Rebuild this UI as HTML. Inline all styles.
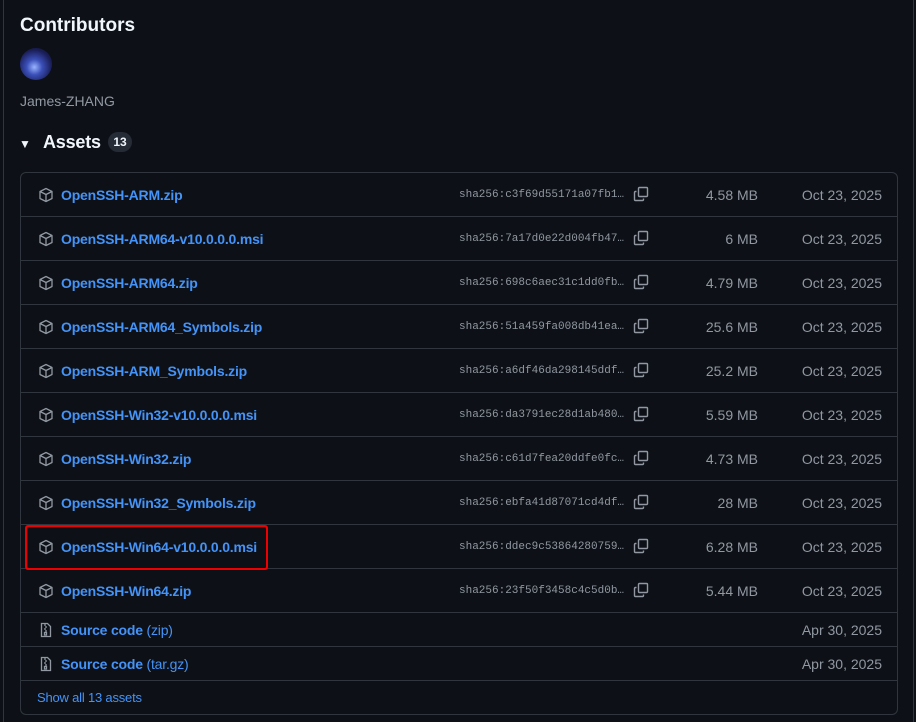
<!DOCTYPE html>
<html><head><style>
body{margin:0;background:#0d1117;width:916px;height:722px;overflow:hidden;font-family:"Liberation Sans",sans-serif;color:#f0f6fc;position:relative}
.vl{position:absolute;top:0;bottom:0;width:1px;background:#30363d}
h2{position:absolute;left:20px;top:15px;margin:0;font-size:19px;font-weight:bold}
.av{position:absolute;left:20px;top:48px;width:32px;height:32px;border-radius:50%;background:radial-gradient(circle at 45% 60%,#9ab4ff 0,#3a4fb8 30%,#1b1f5a 65%,#0c0e25 100%)}
.name{position:absolute;left:20px;top:93px;font-size:14px;color:#9198a1}
.tri{position:absolute;left:19px;top:137px;font-size:12px}
.as{position:absolute;left:43px;top:132px;font-size:18px;font-weight:bold;letter-spacing:-0.2px}
.cnt{position:absolute;left:108px;top:132px;width:24px;height:20px;border-radius:10px;background:#262c36;font-size:12px;text-align:center;line-height:20px;font-weight:bold}
.box{position:absolute;left:20px;top:172px;width:876px;height:541px;border:1px solid #30363d;border-radius:6px}
.row{position:absolute;left:0;right:0;border-bottom:1px solid #30363d;font-size:14px}
.row a{position:absolute;left:40px;color:#4493f8;font-weight:bold;text-decoration:none;letter-spacing:-0.2px}
.ic{position:absolute;left:17px}
.sha{position:absolute;left:438px;font-family:"Liberation Mono",monospace;font-size:11px;color:#9198a1}
.cp{position:absolute;left:612px}
.sz{position:absolute;right:139px;color:#9198a1}
.dt{position:absolute;right:15px;color:#9198a1}
</style></head><body>
<div class="vl" style="left:3px"></div><div class="vl" style="left:913px"></div>
<h2>Contributors</h2>
<div class="av"></div>
<div class="name">James-ZHANG</div>
<div class="tri">▼</div><div class="as">Assets</div><div class="cnt">13</div>
<div class="box" id="b"></div>
<div style="position:absolute;left:25px;top:525px;width:239px;height:41px;border:2px solid #e00;border-radius:3px"></div>
<script>
const d=[["OpenSSH-ARM.zip","c3f69d55171a07fb1","4.58 MB"],["OpenSSH-ARM64-v10.0.0.0.msi","7a17d0e22d004fb47","6 MB"],["OpenSSH-ARM64.zip","698c6aec31c1dd0fb","4.79 MB"],["OpenSSH-ARM64_Symbols.zip","51a459fa008db41ea","25.6 MB"],["OpenSSH-ARM_Symbols.zip","a6df46da298145ddf","25.2 MB"],["OpenSSH-Win32-v10.0.0.0.msi","da3791ec28d1ab480","5.59 MB"],["OpenSSH-Win32.zip","c61d7fea20ddfe0fc","4.73 MB"],["OpenSSH-Win32_Symbols.zip","ebfa41d87071cd4df","28 MB"],["OpenSSH-Win64-v10.0.0.0.msi","ddec9c53864280759","6.28 MB"],["OpenSSH-Win64.zip","23f50f3458c4c5d0b","5.44 MB"]];
const pkg='<svg width="16" height="16" viewBox="0 0 16 16" fill="none" stroke="#9198a1" stroke-width="1.3" stroke-linejoin="round"><path d="M8 1.5l6 3v7l-6 3-6-3v-7z"/><path d="M2 4.5l6 3 6-3M8 7.5v7"/></svg>';
const cp='<svg width="16" height="16" viewBox="0 0 16 16" fill="none" stroke="#9198a1" stroke-width="1.4"><rect x="5.5" y="1.5" width="9" height="9" rx="1"/><path d="M3.5 5.5h-1a1 1 0 0 0-1 1v7a1 1 0 0 0 1 1h7a1 1 0 0 0 1-1v-1"/></svg>';
const zip='<svg width="16" height="16" viewBox="0 0 16 16" fill="none" stroke="#9198a1" stroke-width="1.3"><path d="M3.5 1.5h6l3 3v10h-9z"/><path d="M7 2v2M8 4v2M7 6v2M8 8v2"/><rect x="6.5" y="10.5" width="2" height="2.5"/></svg>';
let h='',y=0;
d.forEach(r=>{h+=`<div class="row" style="top:${y}px;height:43px"><span class="ic" style="top:14px">${pkg}</span><a style="top:14px">${r[0]}</a><span class="sha" style="top:16px">sha256:${r[1]}…</span><span class="cp" style="top:13px">${cp}</span><span class="sz" style="top:14px">${r[2]}</span><span class="dt" style="top:14px">Oct 23, 2025</span></div>`;y+=44;});
[["zip"],["tar.gz"]].forEach(r=>{h+=`<div class="row" style="top:${y}px;height:33px"><span class="ic" style="top:9px">${zip}</span><a style="top:9px">Source code <span style="font-weight:normal">(${r[0]})</span></a><span class="dt" style="top:9px">Apr 30, 2025</span></div>`;y+=34;});
h+=`<div class="row" style="top:${y}px;border:none"><a style="left:16px;top:9px;font-weight:normal;font-size:13px">Show all 13 assets</a></div>`;
document.getElementById('b').innerHTML=h;
</script>
</body></html>
